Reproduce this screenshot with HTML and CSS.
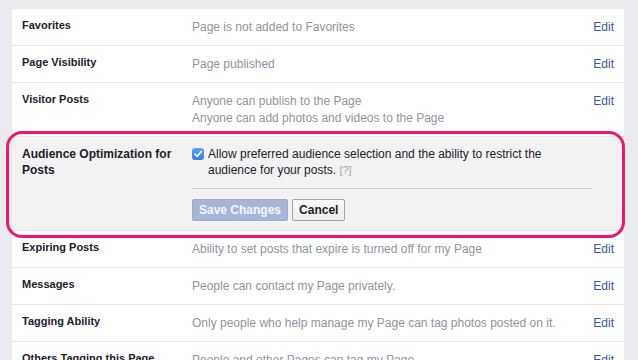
FILE: index.html
```html
<!DOCTYPE html>
<html lang="en">
<head>
<meta charset="utf-8">
<title>Page Settings</title>
<link rel="stylesheet" href="styles.css">
</head>
<body>
<div class="page">
  <div class="card">
    <div class="row">
      <div class="label">Favorites</div>
      <div class="value">Page is not added to Favorites</div>
      <a class="edit" href="#">Edit</a>
    </div>
    <div class="row">
      <div class="label">Page Visibility</div>
      <div class="value">Page published</div>
      <a class="edit" href="#">Edit</a>
    </div>
    <div class="row">
      <div class="label">Visitor Posts</div>
      <div class="value">Anyone can publish to the Page<br>Anyone can add photos and videos to the Page</div>
      <a class="edit" href="#">Edit</a>
    </div>
    <div class="row editing">
      <div class="label label-lg">Audience Optimization for Posts</div>
      <div class="editor">
        <label class="check">
          <span class="box"><svg viewBox="0 0 12 12" width="12" height="12"><path d="M3 6.2 L5.1 8.4 L9.2 3.6" fill="none" stroke="#fff" stroke-width="1.7" stroke-linecap="round" stroke-linejoin="round"/></svg></span>
          <span class="check-text">Allow preferred audience selection and the ability to restrict the audience for your posts. <span class="help">[?]</span></span>
        </label>
        <div class="sep"></div>
        <div class="buttons">
          <button class="btn btn-primary" type="button">Save Changes</button>
          <button class="btn btn-default" type="button">Cancel</button>
        </div>
      </div>
    </div>
    <div class="row">
      <div class="label">Expiring Posts</div>
      <div class="value">Ability to set posts that expire is turned off for my Page</div>
      <a class="edit" href="#">Edit</a>
    </div>
    <div class="row">
      <div class="label">Messages</div>
      <div class="value">People can contact my Page privately.</div>
      <a class="edit" href="#">Edit</a>
    </div>
    <div class="row">
      <div class="label">Tagging Ability</div>
      <div class="value">Only people who help manage my Page can tag photos posted on it.</div>
      <a class="edit" href="#">Edit</a>
    </div>
    <div class="row">
      <div class="label">Others Tagging this Page</div>
      <div class="value">People and other Pages can tag my Page.</div>
      <a class="edit" href="#">Edit</a>
    </div>
  </div>
  <div class="highlight"></div>
</div>
</body>
</html>
```
FILE: styles.css
```css
html, body {
  margin: 0;
  padding: 0;
}
body {
  background: #e9ebee;
  font-family: "Liberation Sans", Arial, Helvetica, sans-serif;
  color: #1d2129;
}
.page {
  position: relative;
  width: 638px;
  height: 360px;
  overflow: hidden;
}
.card {
  margin: 9px 14px 0 12px;
  background: #fff;
  border-radius: 3px 3px 0 0;
}
.row {
  display: grid;
  grid-template-columns: 170px 1fr auto;
  padding: 10px 10px 9px 10px;
  border-bottom: 1px solid #e5e6e9;
}
.label {
  font-size: 11px;
  font-weight: bold;
  line-height: 13px;
  color: #1d2129;
}
.label-lg {
  font-size: 12px;
  line-height: 16px;
}
.value {
  font-size: 12px;
  line-height: 17px;
  color: #90949c;
}
.edit {
  font-size: 12px;
  line-height: 17px;
  color: #365899;
  text-decoration: none;
}
.editing {
  background: #f2f2f2;
  padding: 9px 10px 9px 10px;
}
.editor {
  grid-column: 2 / 4;
  width: 400px;
}
.check {
  display: flex;
  gap: 4px;
  align-items: flex-start;
  font-size: 12px;
  line-height: 16px;
  color: #1d2129;
}
.box {
  flex: none;
  width: 12px;
  height: 12px;
  margin-top: 2px;
  border-radius: 3px;
  background: linear-gradient(#5ea2fb, #2d7bf4);
  display: flex;
}
.check-text {
  max-width: 360px;
}
.help {
  font-size: 11px;
  color: #a7a7a7;
}
.sep {
  height: 1px;
  background: #cfcfcf;
  margin: 10px 0 10px 0;
}
.buttons {
  display: flex;
  gap: 4px;
}
.btn {
  height: 22px;
  padding: 0 6px;
  font-family: "Liberation Sans", Arial, Helvetica, sans-serif;
  font-size: 12px;
  font-weight: bold;
  line-height: 20px;
  border-radius: 2px;
  box-sizing: border-box;
}
.btn-primary {
  background: #a7b6d8;
  border: 1px solid #9caccf;
  color: #f4f6fb;
}
.btn-default {
  background: linear-gradient(#fafafa, #eeeeee);
  border: 1px solid #a3a3a3;
  color: #1d2129;
}
.highlight {
  position: absolute;
  left: 6px;
  top: 131px;
  width: 619px;
  height: 107px;
  box-sizing: border-box;
  border: 3px solid #f2166b;
  border-radius: 16px;
  pointer-events: none;
}
```
